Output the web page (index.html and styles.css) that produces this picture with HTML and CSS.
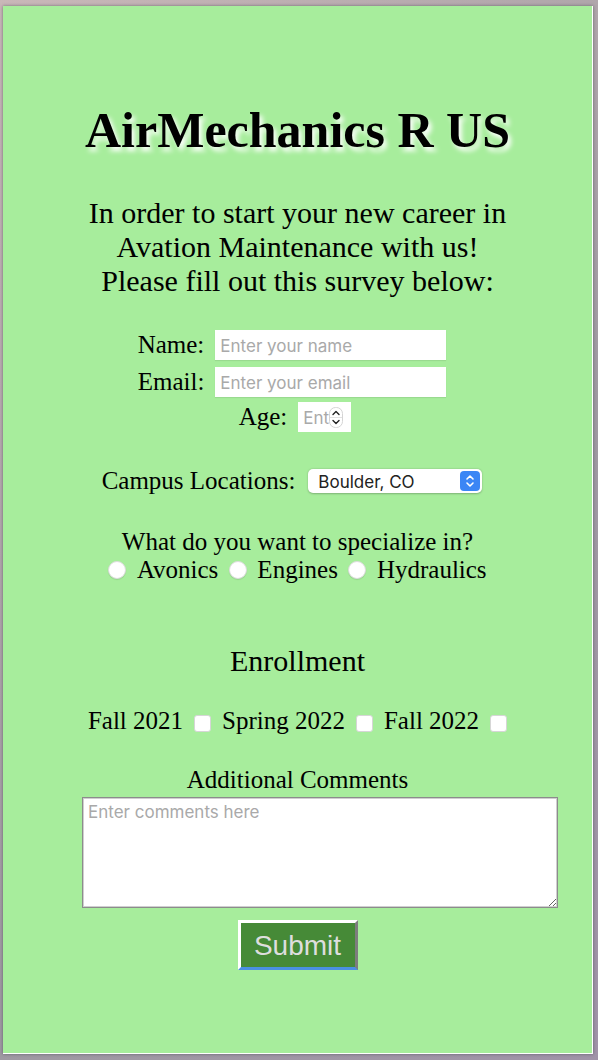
FILE: index.html
```html
<!DOCTYPE html>
<html lang="en">
<head>
<meta charset="utf-8">
<title>AirMechanics R US</title>
<link rel="stylesheet" href="styles.css">
</head>
<body>
<main class="page">
  <h1 class="title">AirMechanics R US</h1>
  <p class="intro">In order to start your new career in<br>Avation Maintenance with us!<br>Please fill out this survey below:</p>
  <form class="survey">
    <div class="row row-name">
      <label class="label" for="name">Name:</label>
      <input class="text-input" id="name" type="text" placeholder="Enter your name">
    </div>
    <div class="row row-email">
      <label class="label" for="email">Email:</label>
      <input class="text-input" id="email" type="email" placeholder="Enter your email">
    </div>
    <div class="row row-age">
      <label class="label" for="age">Age:</label>
      <span class="age-wrap">
        <input class="age-input" id="age" type="number" placeholder="Enter your age">
        <svg class="spinner" width="14" height="21" viewBox="0 0 14 21">
          <rect x="0.5" y="0.5" width="13" height="20" rx="6" fill="#fff" stroke="#d4d4d4"/>
          <line x1="1" y1="10.5" x2="13" y2="10.5" stroke="#e2e2e2"/>
          <path d="M4 7.5 L7 4.5 L10 7.5" fill="none" stroke="#222" stroke-width="1.4" stroke-linecap="round" stroke-linejoin="round"/>
          <path d="M4 13.5 L7 16.5 L10 13.5" fill="none" stroke="#222" stroke-width="1.4" stroke-linecap="round" stroke-linejoin="round"/>
        </svg>
      </span>
    </div>
    <div class="row row-campus">
      <label class="label" for="campus">Campus Locations:</label>
      <span class="select-wrap">
        <select class="select" id="campus">
          <option>Boulder, CO</option>
          <option>Denver, CO</option>
        </select>
        <svg class="select-arrow" width="20" height="20" viewBox="0 0 20 20">
          <rect width="20" height="20" rx="4" fill="#3b86f5"/>
          <path d="M7 8 L10 5 L13 8" fill="none" stroke="#fff" stroke-width="1.6" stroke-linecap="round" stroke-linejoin="round"/>
          <path d="M7 12 L10 15 L13 12" fill="none" stroke="#fff" stroke-width="1.6" stroke-linecap="round" stroke-linejoin="round"/>
        </svg>
      </span>
    </div>
    <p class="question">What do you want to specialize in?</p>
    <div class="choice-row">
      <input class="radio" type="radio" name="spec" id="avonics"><label for="avonics">Avonics</label>
      <input class="radio" type="radio" name="spec" id="engines"><label for="engines">Engines</label>
      <input class="radio" type="radio" name="spec" id="hydraulics"><label for="hydraulics">Hydraulics</label>
    </div>
    <h2 class="enroll">Enrollment</h2>
    <div class="check-row">
      <label for="f21">Fall 2021</label><input class="check" type="checkbox" id="f21">
      <label for="s22">Spring 2022</label><input class="check" type="checkbox" id="s22">
      <label for="f22">Fall 2022</label><input class="check" type="checkbox" id="f22">
    </div>
    <label class="comments-label" for="comments">Additional Comments</label>
    <textarea class="comments" id="comments" placeholder="Enter comments here"></textarea>
    <button class="submit" type="button">Submit</button>
  </form>
</main>
</body>
</html>
```

FILE: styles.css
```css
html, body {
  margin: 0;
  padding: 0;
}
body {
  background: linear-gradient(135deg, #c9b7b8 0%, #9f9aa2 60%, #a093a8 100%);
  width: 598px;
  height: 1060px;
  overflow: hidden;
  font-family: "Liberation Serif", "Times New Roman", serif;
  color: #000;
}
.page {
  box-sizing: border-box;
  margin: 6px 0 0 3px;
  width: 590px;
  height: 1048px;
  background: #a7ed9c;
  border-right: 1px solid #fff;
  border-bottom: 1px solid #fff;
  box-shadow: 0 0 3px rgba(60, 60, 70, 0.6);
  display: flex;
  flex-direction: column;
  align-items: center;
  padding-top: 96px;
}
.title {
  margin: 0;
  font-size: 50px;
  line-height: 56px;
  font-weight: bold;
  text-shadow: 3px 4px 5px #fff;
}
.intro {
  margin: 38px 0 0;
  font-size: 30px;
  line-height: 34px;
  text-align: center;
}
.survey {
  width: 100%;
  display: flex;
  flex-direction: column;
  align-items: center;
  margin-top: 32px;
}
.row {
  display: flex;
  align-items: center;
  justify-content: center;
  gap: 11px;
  font-size: 25px;
  height: 30px;
}
.row-email { margin-top: 7px; }
.row-age { margin-top: 5px; padding-right: 5px; }
.row-name, .row-email { padding-right: 11px; }
.row-campus { margin-top: 35px; height: 28px; padding-right: 11px; gap: 13px; }
.text-input {
  box-sizing: border-box;
  width: 231px;
  height: 30px;
  border: none;
  outline: none;
  background: #fff;
  padding: 1px 5px 0;
  font-family: Inter, "Liberation Sans", Arial, sans-serif;
  font-size: 17px;
  color: #222;
  box-shadow: 0 1px 1px rgba(0, 0, 0, 0.08);
}
.text-input::placeholder,
.age-input::placeholder,
.comments::placeholder {
  color: #a9a9a9;
}
.age-wrap {
  position: relative;
  display: inline-flex;
}
.age-input {
  box-sizing: border-box;
  width: 53px;
  height: 30px;
  border: none;
  outline: none;
  background: #fff;
  padding: 1px 22px 0 5px;
  font-family: Inter, "Liberation Sans", Arial, sans-serif;
  font-size: 17px;
  -moz-appearance: textfield;
}
.age-input::-webkit-inner-spin-button,
.age-input::-webkit-outer-spin-button {
  -webkit-appearance: none;
  margin: 0;
}
.spinner {
  position: absolute;
  left: 31px;
  top: 5px;
}
.select-wrap {
  position: relative;
  display: inline-flex;
}
.select {
  -webkit-appearance: none;
  appearance: none;
  box-sizing: border-box;
  width: 174px;
  height: 24px;
  border: none;
  border-radius: 5px;
  background: #fff;
  padding: 1px 0 0 10px;
  font-family: Inter, "Liberation Sans", Arial, sans-serif;
  font-size: 17px;
  color: #222;
  box-shadow: 0 0.5px 2px rgba(0, 0, 0, 0.25);
}
.select-arrow {
  position: absolute;
  right: 2px;
  top: 2px;
  pointer-events: none;
}
.question {
  margin: 32px 0 0;
  font-size: 25px;
  line-height: 29px;
}
.choice-row,
.check-row {
  display: flex;
  align-items: center;
  justify-content: center;
  font-size: 25px;
  line-height: 28px;
  height: 28px;
}
.choice-row { gap: 10.5px; }
.check-row { gap: 11px; margin-top: 29px; }
.radio {
  -webkit-appearance: none;
  appearance: none;
  margin: 0;
  width: 18px;
  height: 18px;
  border-radius: 50%;
  background: #fff;
  border: 1px solid #dcdcdc;
  box-sizing: border-box;
  box-shadow: 0 1px 1px rgba(0, 0, 0, 0.1);
}
.check {
  -webkit-appearance: none;
  appearance: none;
  margin: 4px 0 0;
  width: 17px;
  height: 17px;
  border-radius: 3px;
  background: #fff;
  border: 1px solid #d6d6d6;
  box-sizing: border-box;
}
.enroll {
  margin: 60px 0 0;
  font-size: 30px;
  line-height: 34px;
  font-weight: normal;
}
.comments-label {
  margin-top: 31px;
  font-size: 25px;
  line-height: 28px;
}
.comments {
  align-self: flex-start;
  margin: 3px 0 0 79px;
  box-sizing: border-box;
  width: 476px;
  height: 111px;
  border: 1px solid #8c8c8c;
  box-shadow: inset 0 0 0 1px #cfcfcf;
  background: #fff;
  padding: 4px 5px;
  font-family: Inter, "Liberation Sans", Arial, sans-serif;
  font-size: 17px;
  outline: none;
}
.submit {
  margin-top: 12px;
  box-sizing: border-box;
  width: 120px;
  height: 50px;
  padding: 2px 0 0;
  background: #468a37;
  color: #dedede;
  font-family: "Liberation Sans", Arial, sans-serif;
  font-size: 28px;
  border-style: solid;
  border-width: 3px;
  border-color: #fff #7d7d7d #4a90e2 #fff;
}
```
